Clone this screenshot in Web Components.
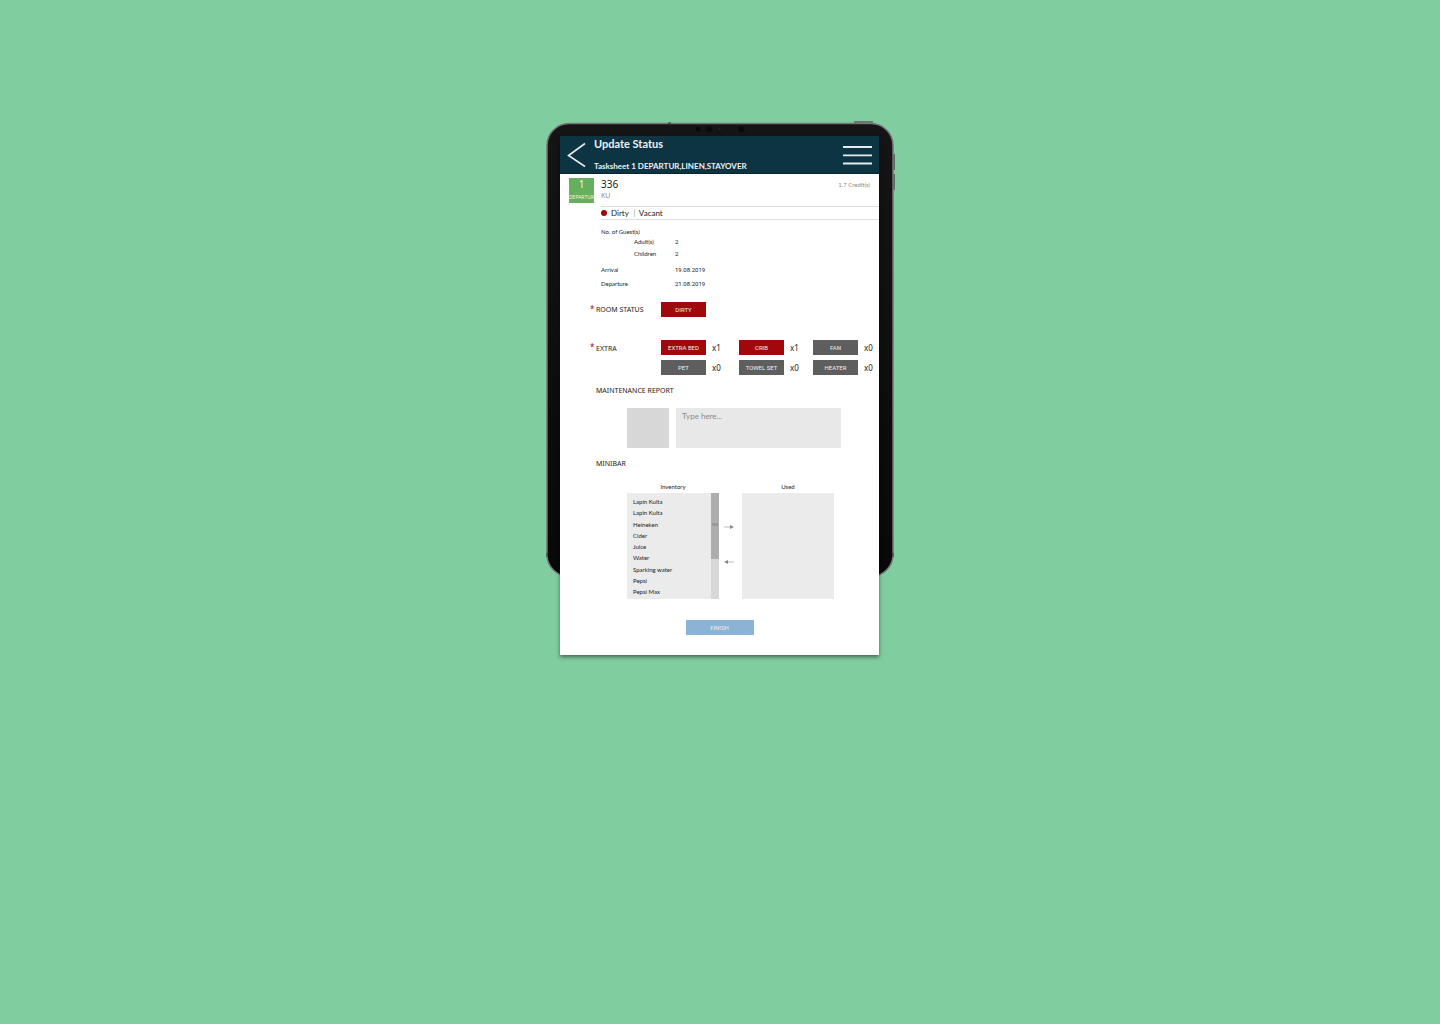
<!DOCTYPE html>
<html lang="en">
<head>
<meta charset="utf-8">
<meta name="viewport" content="width=device-width, initial-scale=1">
<title>Update Status</title>
<style>
  body { margin: 0; min-height: 100vh; background: #80cda0; font-family: Lato, "Noto Sans", sans-serif; color: #222; --caps: "Noto Sans", sans-serif; --tag: Roboto, sans-serif; }
</style>
</head>
<body>
<update-status-page></update-status-page>

<script>
const define = (name, html, setup) => {
  const tpl = document.createElement('template');
  tpl.innerHTML = '<style>*{box-sizing:border-box}button{font:inherit;border:0;padding:0;margin:0;cursor:pointer}</style>' + html;
  customElements.define(name, class extends HTMLElement {
    constructor() {
      super();
      this.attachShadow({ mode: 'open' }).append(tpl.content.cloneNode(true));
    }
    connectedCallback() { if (setup) setup(this, this.shadowRoot); }
  });
};

define('tablet-frame', `
  <style>
    :host { display: block; position: relative; width: 348px; max-width: 100%; padding: 14px 15px 0 14px; box-sizing: border-box; }
    .shell { position: absolute; inset: 0 0 auto; width: 100%; height: 456px; overflow: visible; }
    .screen { position: relative; background: #fff; box-shadow: 0 2px 4px rgba(0,0,0,.5); }
  </style>
  <svg class="shell" viewBox="0 0 348 456" fill="none" aria-hidden="true">
    <defs><linearGradient id="g" x2="0" y2="1"><stop stop-color="#151515"/><stop offset="1" stop-color="#080808"/></linearGradient></defs>
    <rect x="308" y="-1" width="19" height="3" fill="#66776e"/>
    <rect x="346" y="32" width="3" height="16" fill="#5c6b63"/>
    <rect x="346" y="52" width="3" height="16" fill="#5c6b63"/>
    <rect x="1" y="1.500" width="346" height="453" rx="22" fill="url(#g)" stroke="#77737a" stroke-width="1.500"/>
    <path d="M122 1h3M1 431v4M347 431v4" stroke="#333"/>
    <circle cx="152" cy="7" r="2.500" fill="#0a0a0a"/>
    <circle cx="163" cy="7" r="3" fill="#0a0a0a"/>
    <circle cx="173.500" cy="7" r="1.200" fill="#17263a"/>
    <circle cx="195.500" cy="7" r="3" fill="#0a0a0a"/>
  </svg>
  <div class="screen"><slot></slot></div>`);

define('app-header', `
  <style>
    :host { display: flex; align-items: center; height: 38px; padding: 0 6px 0 7px; box-sizing: border-box; background: #0d3443; border-bottom: 1px solid #0a2530; color: #eef2f3; font-weight: 700; }
    button { display: flex; background: none; }
    .titles { flex: 1; height: 38px; padding-left: 8px; display: flex; flex-direction: column; justify-content: space-between; }
    h1, p { margin: 0; font-size: 11px; line-height: 16px; white-space: nowrap; }
    p { font-size: 8px; }
  </style>
  <button aria-label="Back"><svg width="19" height="26" viewBox="0 0 19 26" fill="none" stroke="#e6eaec" stroke-width="1.600"><path d="M18 1.500 1.500 13.500 18 24.500"/></svg></button>
  <div class="titles"><h1><slot name="title"></slot></h1><p><slot name="subtitle"></slot></p></div>
  <button aria-label="Menu"><svg width="31" height="20" viewBox="0 0 31 20" stroke="#e6eaec" stroke-width="1.800"><path d="M1 2h29M1 10.300h29M1 18.500h29"/></svg></button>`);

define('room-summary', `
  <style>
    :host { display: flex; padding: 4px 9px 0; gap: 7px; height: 32px; box-sizing: border-box; }
    .badge { width: 25px; height: 25px; flex: none; background: #65af5d; color: #edf6ec; display: flex; flex-direction: column; align-items: center; font-family: var(--caps); }
    .badge b { font-weight: 400; font-size: 10px; line-height: 13px; }
    .badge span { font-size: 5px; line-height: 12px; white-space: nowrap; }
    .room { flex: 1; font-family: var(--caps); }
    .num { font-size: 10px; line-height: 13px; }
    .type { font-size: 7px; line-height: 10px; color: #888; }
    .credit { font-size: 6px; line-height: 13px; color: #888; }
  </style>
  <div class="badge"><b>1</b><span>DEPARTUR</span></div>
  <div class="room"><div class="num">336</div><div class="type">KU</div></div>
  <div class="credit">1.7 Credit(s)</div>`);

define('status-line', `
  <style>
    :host { display: flex; align-items: center; margin-left: 41px; height: 14px; padding-bottom: 1px; box-sizing: border-box; border: solid #ddd; border-width: 1px 0; font-size: 8px; line-height: 10px; }
    i { width: 6px; height: 6px; border-radius: 50%; background: #a0080c; margin-right: 4px; }
    .room { margin-left: 5px; padding-left: 4px; border-left: 1px solid #ccc; line-height: 8px; }
  </style>
  <i></i><span>Dirty</span><span class="room">Vacant</span>`);

define('stay-details', `
  <style>
    :host { display: block; padding: 7px 9px 0 41px; font-size: 6px; }
    dl { margin: 0; display: grid; grid-template-columns: 74px 1fr; line-height: 12px; }
    dt, dd { margin: 0; }
    dd { font-family: var(--tag); }
    .sub { padding-left: 33px; }
    .head { grid-column: 1 / -1; line-height: 9px; }
    .date { line-height: 14px; }
    .first { padding-top: 3px; }
  </style>
  <dl>
    <dt class="head">No. of Guest(s)</dt>
    <dt class="sub">Adult(s)</dt><dd>2</dd>
    <dt class="sub">Children</dt><dd>2</dd>
    <dt class="date first">Arrival</dt><dd class="date first">19.08.2019</dd>
    <dt class="date">Departure</dt><dd class="date">21.08.2019</dd>
  </dl>`);

define('field-row', `
  <style>
    :host { display: flex; padding: 0 6px 0 30px; }
    .label { flex: none; width: 71px; display: flex; gap: 2px; font: 7px/15px var(--caps); white-space: nowrap; }
    :host([tall]) .label { line-height: 18px; }
    .star { width: 4px; color: #a0080c; font-size: 8px; line-height: 14px; }
    .body { flex: 1; }
  </style>
  <div class="label"><span class="star">*</span><slot name="label"></slot></div>
  <div class="body"><slot></slot></div>`);

define('tag-button', `
  <style>
    :host { display: block; width: 45px; height: 15px; }
    button { display: block; width: 100%; height: 100%; font: 6px/15px var(--tag); color: #eee; background: #5e5e5e; white-space: nowrap; }
    :host([active]) button { background: #a0080c; }
    :host([kind=finish]) { width: 68px; }
    :host([kind=finish]) button { background: #8bb3d6; }
  </style>
  <button type="button"><slot></slot></button>`);

define('extra-option', `
  <style>
    :host { display: flex; gap: 6px; }
    output { font: 8px/16px var(--caps); }
  </style>
  <tag-button><slot></slot></tag-button><output></output>`,
  (host, root) => {
    const n = host.getAttribute('count');
    root.querySelector('output').textContent = 'x' + n;
    root.querySelector('tag-button').toggleAttribute('active', n !== '0');
  });

define('extra-grid', `
  <style>
    :host { display: grid; grid-template-columns: 78px 74px auto; grid-auto-rows: 15px; row-gap: 5px; }
  </style>
  <slot></slot>`);

define('maintenance-report', `
  <style>
    :host { display: block; padding: 0 38px 0 36px; }
    label { display: block; font: 7px/14px var(--caps); }
    .row { display: flex; gap: 7px; padding: 10px 0 0 31px; height: 50px; }
    .photo { width: 42px; flex: none; background: #d7d7d7; }
    textarea { flex: 1; min-width: 0; border: 0; margin: 0; padding: 2px 6px; resize: none; background: #e8e8e8; font: 8px/12px Lato, sans-serif; color: #333; }
    textarea::placeholder { color: #888; opacity: 1; }
  </style>
  <label for="note">MAINTENANCE REPORT</label>
  <div class="row"><button class="photo" aria-label="Add photo"></button><textarea id="note" placeholder="Type here..."></textarea></div>`);

define('stock-list', `
  <style>
    :host { display: block; width: 92px; font-size: 6px; }
    h3 { margin: 0; font-size: 6px; font-weight: 400; line-height: 12px; text-align: center; }
    .box { display: flex; height: 106px; background: #ebebeb; }
    ul { flex: 1; margin: 0; padding: 3px 0 2px 6px; list-style: none; display: flex; flex-direction: column; justify-content: space-between; line-height: 11px; }
    .bar { display: none; width: 8px; background: #d8d8d8; }
    :host([scroll]) .bar { display: block; }
    .thumb { height: 66px; padding-bottom: 4px; background: #adadad; display: flex; align-items: center; justify-content: center; }
    .grip { width: 6px; height: 3px; background: #999; }
  </style>
  <h3><slot name="heading"></slot></h3>
  <div class="box"><ul></ul><div class="bar"><div class="thumb"><div class="grip"></div></div></div></div>`,
  (host, root) => {
    const items = (host.getAttribute('items') || '').split(',').filter(Boolean);
    root.querySelector('ul').replaceChildren(...items.map(t => Object.assign(document.createElement('li'), { textContent: t })));
  });

define('mini-bar', `
  <style>
    :host { display: block; padding: 0 36px; }
    h2 { margin: 0; font: 7px/14px var(--caps); }
    .row { display: flex; padding: 10px 0 0 31px; }
    .moves { width: 23px; padding: 42px 3px 0 0; display: flex; flex-direction: column; align-items: center; gap: 27px; }
    .moves button { display: flex; background: none; }
  </style>
  <h2>MINIBAR</h2>
  <div class="row">
    <stock-list scroll items="Lapin Kulta,Lapin Kulta,Heineken,Cider,Juice,Water,Sparking water,Pepsi,Pepsi Max"><span slot="heading">Inventory</span></stock-list>
    <div class="moves">
      <button aria-label="Move to used"><svg width="10" height="8" viewBox="0 0 10 8"><path d="M0 4h7" stroke="#bbb"/><path d="M6 2l4 2-4 2z" fill="#888"/></svg></button>
      <button aria-label="Move to inventory"><svg width="10" height="8" viewBox="0 0 10 8"><path d="M10 4H3" stroke="#bbb"/><path d="M4 2L0 4l4 2z" fill="#888"/></svg></button>
    </div>
    <stock-list><span slot="heading">Used</span></stock-list>
  </div>`);

define('update-status-page', `
  <style>
    :host { display: flex; justify-content: center; padding-top: 122px; }
    main { display: flex; flex-direction: column; padding-bottom: 20px; }
    .status { margin-top: 11px; }
    .extra { margin-top: 23px; }
    maintenance-report { margin-top: 9px; }
    mini-bar { margin-top: 9px; }
    .finish { align-self: center; margin-top: 21px; }
  </style>
  <tablet-frame>
    <app-header><span slot="title">Update Status</span><span slot="subtitle">Tasksheet 1 DEPARTUR,LINEN,STAYOVER</span></app-header>
    <main>
      <room-summary></room-summary>
      <status-line></status-line>
      <stay-details></stay-details>
      <field-row class="status"><span slot="label">ROOM STATUS</span><tag-button active>DIRTY</tag-button></field-row>
      <field-row class="extra" tall><span slot="label">EXTRA</span>
        <extra-grid>
          <extra-option count="1">EXTRA BED</extra-option>
          <extra-option count="1">CRIB</extra-option>
          <extra-option count="0">FAN</extra-option>
          <extra-option count="0">PET</extra-option>
          <extra-option count="0">TOWEL SET</extra-option>
          <extra-option count="0">HEATER</extra-option>
        </extra-grid>
      </field-row>
      <maintenance-report></maintenance-report>
      <mini-bar></mini-bar>
      <tag-button class="finish" kind="finish">FINISH</tag-button>
    </main>
  </tablet-frame>`);
</script>
</body>
</html>
